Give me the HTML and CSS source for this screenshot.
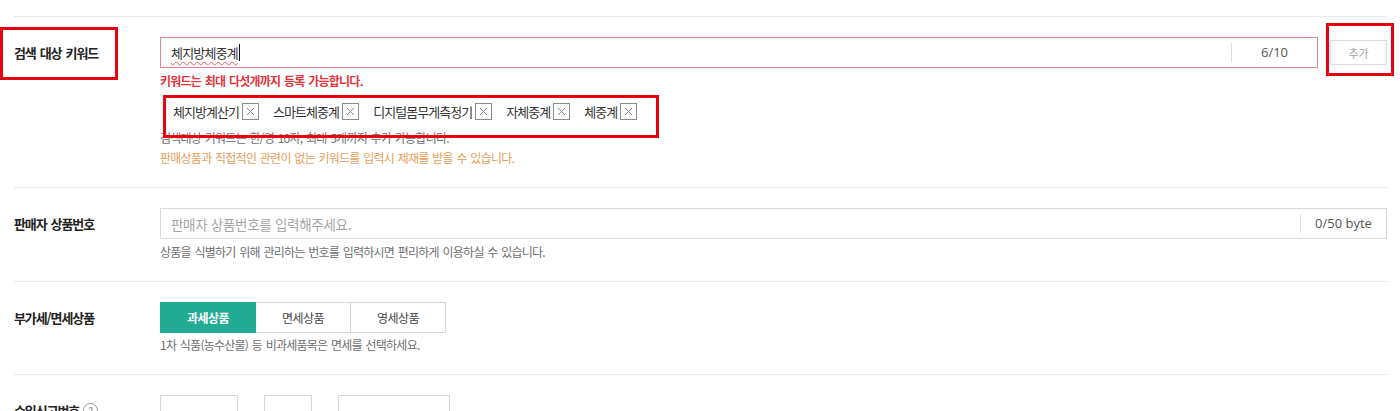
FILE: index.html
```html
<!DOCTYPE html>
<html lang="ko">
<head>
<meta charset="utf-8">
<title>상품 등록</title>
<link rel="stylesheet" href="styles.css">
</head>
<body>
<div class="page">
  <section class="row">
    <div class="label">검색 대상 키워드</div>
    <div class="field">
      <div class="input-line">
        <div class="input invalid">
          <span class="value">체지방체중계</span><span class="caret"></span>
          <span class="counter">6/10</span>
        </div>
        <button class="add" type="button">추가</button>
      </div>
      <p class="error">키워드는 최대 다섯개까지 등록 가능합니다.</p>
      <ul class="tags">
        <li class="tag">체지방계산기<span class="x"><svg viewBox="0 0 15 15" width="15" height="15"><path d="M4 4L11 11M11 4L4 11" stroke="#8c8c8c" stroke-width="1"/></svg></span></li>
        <li class="tag">스마트체중계<span class="x"><svg viewBox="0 0 15 15" width="15" height="15"><path d="M4 4L11 11M11 4L4 11" stroke="#8c8c8c" stroke-width="1"/></svg></span></li>
        <li class="tag">디지털몸무게측정기<span class="x"><svg viewBox="0 0 15 15" width="15" height="15"><path d="M4 4L11 11M11 4L4 11" stroke="#8c8c8c" stroke-width="1"/></svg></span></li>
        <li class="tag">자체중계<span class="x"><svg viewBox="0 0 15 15" width="15" height="15"><path d="M4 4L11 11M11 4L4 11" stroke="#8c8c8c" stroke-width="1"/></svg></span></li>
        <li class="tag">체중계<span class="x"><svg viewBox="0 0 15 15" width="15" height="15"><path d="M4 4L11 11M11 4L4 11" stroke="#8c8c8c" stroke-width="1"/></svg></span></li>
      </ul>
      <p class="help">검색대상 키워드는 한/영 10자, 최대 5개까지 추가 가능합니다.</p>
      <p class="warn">판매상품과 직접적인 관련이 없는 키워드를 입력시 제재를 받을 수 있습니다.</p>
    </div>
  </section>

  <section class="row">
    <div class="label">판매자 상품번호</div>
    <div class="field">
      <div class="input">
        <span class="placeholder">판매자 상품번호를 입력해주세요.</span>
        <span class="counter">0/50 byte</span>
      </div>
      <p class="help">상품을 식별하기 위해 관리하는 번호를 입력하시면 편리하게 이용하실 수 있습니다.</p>
    </div>
  </section>

  <section class="row">
    <div class="label">부가세/면세상품</div>
    <div class="field">
      <div class="segment">
        <button class="seg on" type="button">과세상품</button>
        <button class="seg" type="button">면세상품</button>
        <button class="seg" type="button">영세상품</button>
      </div>
      <p class="help tight">1차 식품(농수산물) 등 비과세품목은 면세를 선택하세요.</p>
    </div>
  </section>

  <section class="row">
    <div class="label">수입신고번호 <span class="qmark">?</span></div>
    <div class="field">
      <div class="import-no">
        <span class="box b1"></span><span class="dash">-</span><span class="box b2"></span><span class="dash">-</span><span class="box b3"></span>
      </div>
    </div>
  </section>

  <span class="mark mark-label"></span>
  <span class="mark mark-add"></span>
  <span class="mark mark-tags"></span>
</div>
</body>
</html>
```

FILE: styles.css
```css
* { box-sizing: border-box; }
html, body { margin: 0; padding: 0; background: #fff; }
body {
  font-family: "Noto Sans CJK KR", "Noto Sans", sans-serif;
  color: #222;
  overflow: hidden;
  height: 411px;
}
.page {
  position: relative;
  padding: 16px 13px 0 14px;
}
.row {
  display: flex;
  align-items: flex-start;
  border-top: 1px solid #e8e8e8;
  padding: 20px 0 20px;
}
.label {
  width: 146px;
  height: 31px;
  flex: none;
  font-size: 13px;
  font-weight: bold;
  letter-spacing: -1.1px;
  word-spacing: 1.5px;
  color: #222;
  display: flex;
  align-items: center;
  gap: 4px;
}
.field { flex: 1; min-width: 0; }
.input-line { display: flex; gap: 12px; align-items: center; }
.input {
  flex: 1;
  height: 31px;
  border: 1px solid #d9d9d9;
  display: flex;
  align-items: center;
  padding-left: 10px;
  font-size: 13px;
  letter-spacing: -0.8px;
}
.input.invalid { border-color: #e08a8d; }
.value {
  color: #333;
  text-decoration: underline wavy #e05a5a;
  text-decoration-thickness: 1px;
  text-underline-offset: 3px;
}
.caret { width: 1px; height: 17px; background: #111; margin-left: 1px; }
.placeholder { color: #a6a6a6; font-size: 13.5px; letter-spacing: -0.3px; }
.counter {
  margin-left: auto;
  width: 86px;
  text-align: center;
  border-left: 1px solid #dcdcdc;
  height: 19px;
  line-height: 19px;
  font-family: "Open Sans", "Noto Sans", sans-serif;
  font-size: 13px;
  letter-spacing: 0;
  color: #555;
}
.add {
  width: 57px;
  height: 25px;
  border: 1px solid #dcdcdc;
  background: #fff;
  color: #a8a8a8;
  font-family: inherit;
  font-size: 11px;
  padding: 0;
  flex: none;
}
p { margin: 0; }
.error, .help, .warn {
  font-size: 12px;
  letter-spacing: -0.75px;
  word-spacing: 1px;
  line-height: 18px;
}
.error { color: #e2353c; font-weight: bold; margin-top: 4px; }
.help { color: #6f6f6f; margin-top: 4px; }
.warn { color: #e6a059; margin-top: 2px; }
.tags + .help { margin-top: 7px; }
.help.tight { margin-top: 3px; }
.tags {
  list-style: none;
  margin: 10px 0 0;
  padding: 0 0 0 13px;
  display: flex;
  gap: 14px;
  height: 22px;
  align-items: center;
}
.tag {
  display: flex;
  align-items: center;
  gap: 3px;
  font-size: 13px;
  letter-spacing: -0.95px;
  color: #333;
}
.x {
  width: 17px;
  height: 17px;
  border: 1px solid #8c8c8c;
  display: flex;
  align-items: center;
  justify-content: center;
}
.x svg { display: block; }
.segment { display: flex; }
.seg {
  width: 95px;
  height: 31px;
  border: 1px solid #d6d6d6;
  border-left: none;
  background: #fff;
  font-family: inherit;
  font-size: 12px;
  letter-spacing: -0.6px;
  color: #444;
  padding: 0;
}
.seg:first-child { width: 96px; border: 1px solid #21ab95; }
.seg.on { background: #21ab95; color: #fff; font-weight: bold; }
.qmark {
  display: inline-flex;
  width: 15px;
  height: 15px;
  border: 1px solid #9a9a9a;
  border-radius: 50%;
  font-size: 10px;
  font-weight: normal;
  color: #777;
  align-items: center;
  justify-content: center;
  letter-spacing: 0;
  line-height: 1;
}
.import-no { display: flex; align-items: center; }
.box { height: 31px; border: 1px solid #d6d6d6; }
.b1 { width: 78px; }
.b2 { width: 48px; }
.b3 { width: 112px; }
.dash { width: 26px; text-align: center; font-size: 12px; color: #555; }
.mark {
  position: absolute;
  border: 3px solid #e60012;
  pointer-events: none;
}
.mark-label { left: 0; top: 27px; width: 118px; height: 53px; }
.mark-add { left: 1326px; top: 23px; width: 68px; height: 53px; }
.mark-tags { left: 163px; top: 95px; width: 496px; height: 43px; }
```
